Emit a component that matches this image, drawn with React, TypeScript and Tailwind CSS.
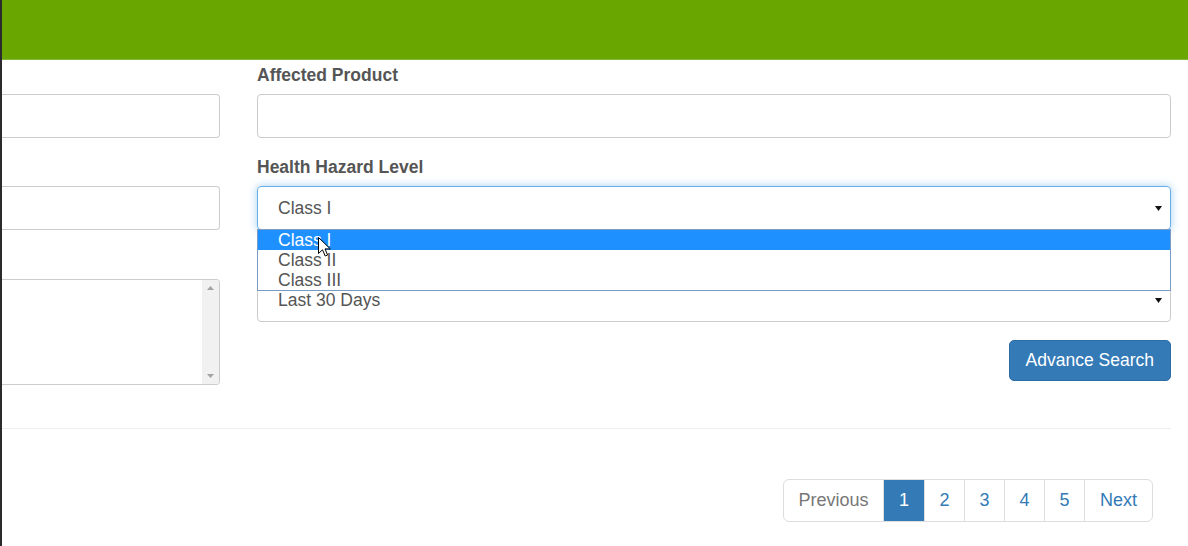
const font = { fontFamily: '"Liberation Sans", Arial, sans-serif' };

const Caret = () => (
  <svg width="7" height="5" viewBox="0 0 7 5" className="block">
    <path d="M0 0 H7 L3.5 5 Z" fill="#111" />
  </svg>
);

const Label = ({ children }: { children?: string }) => (
  <div className="h-[22px] mb-[7px] text-[17.5px] leading-[21px] font-bold text-[#555] whitespace-nowrap">
    {children}
  </div>
);

const Cursor = () => (
  <svg
    width="13"
    height="20"
    viewBox="0 0 13 20"
    className="absolute left-[60px] top-[7px] pointer-events-none"
  >
    <path
      d="M0.5 0.5 V16.5 L4.5 12.8 L7.2 19 L9.6 18 L7 11.9 H12.3 Z"
      fill="#fff"
      stroke="#000"
      strokeWidth="1"
      strokeLinejoin="round"
    />
  </svg>
);

const Pager = () => {
  const base =
    "h-[43px] flex items-center justify-center px-4 text-[18px] border border-[#ddd] -ml-px";
  return (
    <div className="flex">
      <div className={`${base} ml-0 rounded-l-[6px] text-[#777] w-[101px]`}>Previous</div>
      <div className={`${base} w-[42px] bg-[#337ab7] border-[#337ab7] text-white z-10`}>1</div>
      {["2", "3", "4", "5"].map((n) => (
        <div key={n} className={`${base} w-[41px] text-[#337ab7]`}>
          {n}
        </div>
      ))}
      <div className={`${base} w-[69px] rounded-r-[6px] text-[#337ab7]`}>Next</div>
    </div>
  );
};

export default function App() {
  return (
    <div className="flex w-[1188px] h-[546px] bg-white overflow-hidden" style={font}>
      {/* dark left edge */}
      <div className="w-[2px] shrink-0 bg-[#2b2b2b]" />

      <div className="flex-1 flex flex-col">
        {/* header bar */}
        <div className="h-[60px] bg-[#6aa600] border-b border-[#86b93a]" />

        <div className="pr-[17px] pt-[5px]">
          <div className="flex gap-[37px]">
            {/* ================= LEFT COLUMN (scrolled off) ================= */}
            <div className="w-[218px] shrink-0">
              <Label />
              <div className="h-[44px] border border-l-0 border-[#ccc] rounded-r-[4px]" />
              <div className="h-[19px]" />
              <Label />
              <div className="h-[44px] border border-l-0 border-[#ccc] rounded-r-[4px]" />
              <div className="h-[20px]" />
              <Label />
              <div className="h-[106px] border border-l-0 border-[#ccc] rounded-r-[4px] flex justify-end overflow-hidden">
                <div className="w-[17px] bg-[#f1f1f1] flex flex-col items-center justify-between py-[6px]">
                  <svg width="7" height="4" viewBox="0 0 7 4">
                    <path d="M0 4 L3.5 0 L7 4 Z" fill="#a3a3a3" />
                  </svg>
                  <svg width="7" height="4" viewBox="0 0 7 4">
                    <path d="M0 0 H7 L3.5 4 Z" fill="#a3a3a3" />
                  </svg>
                </div>
              </div>
            </div>

            {/* ================= RIGHT COLUMN ================= */}
            <div className="flex-1 flex flex-col">
              <Label>Affected Product</Label>
              <div className="h-[44px] border border-[#ccc] rounded-[4px]" />
              <div className="h-[19px]" />

              <Label>Health Hazard Level</Label>
              <div className="relative z-20">
                <div className="h-[44px] border border-[#66afe9] rounded-[4px] shadow-[0_0_8px_rgba(102,175,233,0.6)] flex items-center justify-between pl-[20px] pr-[8px] text-[17.5px] text-[#555]">
                  <span>Class I</span>
                  <Caret />
                </div>
                {/* open dropdown list */}
                <div className="absolute left-0 right-0 top-[43px] border border-[#7a9cc4] bg-white text-[17.5px] leading-[20px]">
                  <div className="relative h-[20px] bg-[#1e90ff] text-white pl-[20px]">
                    Class I
                    <Cursor />
                  </div>
                  <div className="h-[20px] text-[#555] pl-[20px]">Class II</div>
                  <div className="h-[20px] text-[#555] pl-[20px]">Class III</div>
                </div>
              </div>
              <div className="h-[19px]" />

              <Label />
              <div className="h-[44px] border border-[#ccc] rounded-[4px] flex items-center justify-between pl-[20px] pr-[8px] text-[17.5px] text-[#555]">
                <span>Last 30 Days</span>
                <Caret />
              </div>

              <div className="flex justify-end mt-[18px]">
                <button className="h-[41px] px-4 bg-[#337ab7] border border-[#2e6da4] rounded-[5px] text-white text-[17.5px]">
                  Advance Search
                </button>
              </div>
            </div>
          </div>

          <div className="mt-[43px] border-t border-[#eee]" />

          <div className="flex justify-end pr-[18px] mt-[50px]">
            <Pager />
          </div>
        </div>
      </div>
    </div>
  );
}
